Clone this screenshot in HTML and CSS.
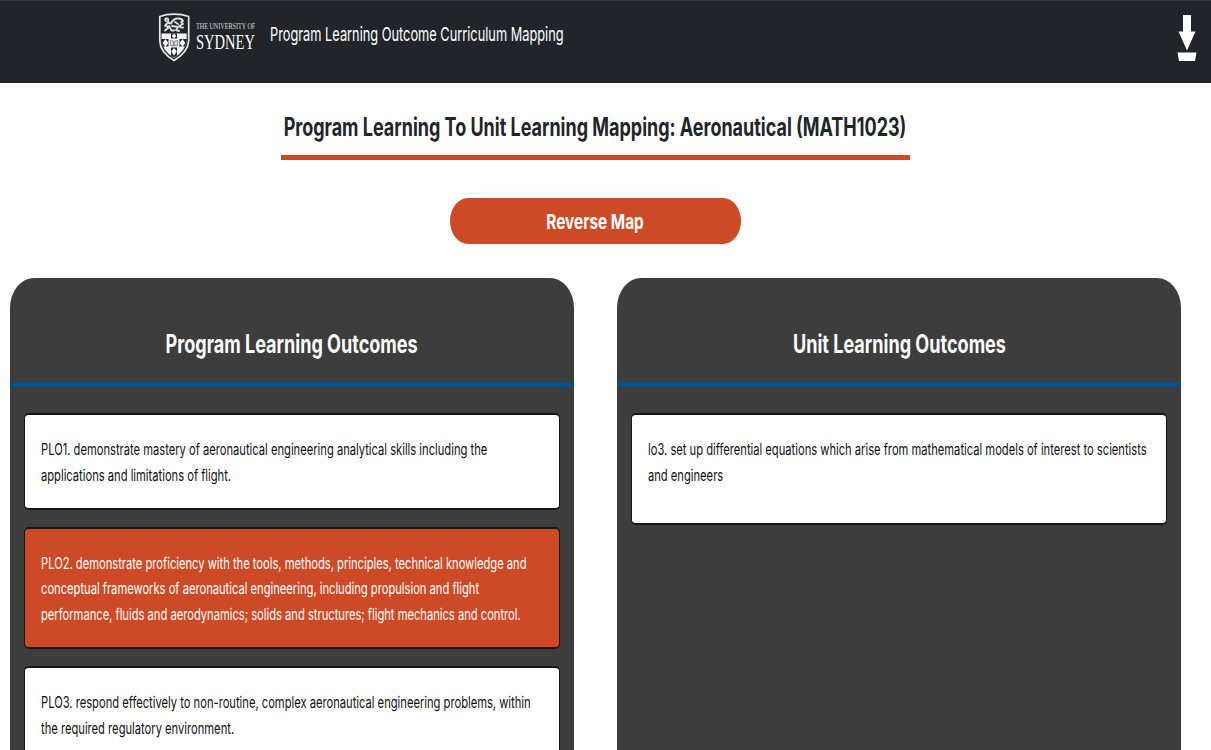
FILE: index.html
```
<!DOCTYPE html>
<html lang="en">
<head>
<meta charset="utf-8">
<title>Program Learning Outcome Curriculum Mapping</title>
<link rel="stylesheet" href="styles.css">
</head>
<body>
<header class="navbar">
  <div class="brand">
    <svg class="crest" width="32" height="50" viewBox="0 0 32 50">
      <path d="M1.8 3.500Q8 1.200 16 1.200Q24 1.200 30.700 3.500V28Q30 39 16 47.500Q2 39 1.800 28Z" fill="#212529" stroke="#e8e8e8" stroke-width="1.700"/>
      <path d="M3.500 20.500H28.700V28Q28 37 16 45Q4 37 3.500 28Z" fill="#f4f4f4"/>
      <path d="M3.300 26H10.500V33.500H4.800Q3.400 31 3.300 26ZM21.500 26H28.900Q28.600 31 27.200 33.500H21.500ZM13 20.500H19V25.500H13ZM13 34.500H19V42.500L16 44.500L13 42.500Z" fill="#212529"/>
      <path d="M7.500 26L10.300 30L7.500 34L4.700 30ZM24.500 26L27.300 30L24.500 34L21.700 30ZM16 20.500L18.200 23L16 25.500L13.800 23ZM16 35L18.800 38.500L16 42.500L13.200 38.500Z" fill="#fff"/>
      <path d="M12.300 27.500L15.700 28.300V33L12.300 32.300ZM19.700 27.500L16.300 28.300V33L19.700 32.300Z" fill="#ddd" stroke="#666" stroke-width=".7"/>
      <path d="M8 8Q6 6 8.500 5.500T10 9L12 10M7 13Q9 9 13 10.500Q15 6 19 5.500Q24 5 25 8L23 9L25 11L21 13Q23 15 25 14.500M8 12L10 15L7 17.500M11 13L13.500 17.500H16M14 13L20 14L18 17L21 18M17 9L20 11" fill="none" stroke="#ddd" stroke-width="1.900" stroke-linecap="round" stroke-linejoin="round"/>
    </svg>
    <div class="wordmark">
      <span class="wordmark-small">THE UNIVERSITY OF</span>
      <span class="wordmark-large">SYDNEY</span>
    </div>
    <span class="app-name">Program Learning Outcome Curriculum Mapping</span>
  </div>
  <svg class="download" width="20" height="48" viewBox="0 0 20 48">
    <path d="M6 1H14V17.500H18.500L10 36.500L1.500 17.500H6ZM0.500 38.500H19.500L18 47H2Z" fill="#fff"/>
  </svg>
</header>
<main>
  <h1 class="title"><span>Program Learning To Unit Learning Mapping: Aeronautical (MATH1023)</span></h1>
  <button class="reverse"><span>Reverse Map</span></button>
  <div class="columns">
    <section class="panel">
      <h2><span>Program Learning Outcomes</span></h2>
      <div class="cards">
        <article class="card"><p>PLO1. demonstrate mastery of aeronautical engineering analytical skills including the<br>applications and limitations of flight.</p></article>
        <article class="card selected"><p>PLO2. demonstrate proficiency with the tools, methods, principles, technical knowledge and<br>conceptual frameworks of aeronautical engineering, including propulsion and flight<br>performance, fluids and aerodynamics; solids and structures; flight mechanics and control.</p></article>
        <article class="card"><p>PLO3. respond effectively to non-routine, complex aeronautical engineering problems, within<br>the required regulatory environment.</p></article>
      </div>
    </section>
    <section class="panel">
      <h2><span>Unit Learning Outcomes</span></h2>
      <div class="cards">
        <article class="card tall"><p>lo3. set up differential equations which arise from mathematical models of interest to scientists<br>and engineers</p></article>
      </div>
    </section>
  </div>
</main>
</body>
</html>
```
FILE: styles.css
```
* { box-sizing: border-box; }
body {
  margin: 0;
  height: 750px;
  overflow: hidden;
  background: #fff;
  color: #212529;
  font-family: Inter, "Liberation Sans", sans-serif;
}
.navbar {
  display: flex;
  justify-content: space-between;
  height: 83px;
  padding: 11px 14.5px 0 158px;
  background: #212529;
  border-top: 1px solid #34383c;
  color: #fff;
}
.brand { display: flex; }
.crest { flex: none; margin-top: .5px; }
.wordmark {
  width: 59px;
  margin-left: 5.5px;
  padding-top: 11px;
  font-family: "Liberation Serif", serif;
  white-space: nowrap;
}
.wordmark span { display: block; transform-origin: left; }
.wordmark-small { font-size: 8px; line-height: 7px; transform: scaleX(.765); color: #ddd; }
.wordmark-large { margin-top: 3px; font-size: 22px; line-height: 18px; transform: scaleX(.66); }
.app-name {
  width: 294px;
  margin-left: 15px;
  padding-top: 11px;
  font-size: 19px;
  line-height: 24px;
  white-space: nowrap;
  transform: scaleX(.673);
  transform-origin: left;
}
.download { margin-top: 2px; }
main {
  display: flex;
  flex-direction: column;
  align-items: center;
  padding: 28px 30px 0 10px;
}
.title {
  display: flex;
  justify-content: center;
  width: 629px;
  height: 49px;
  margin: 0;
  border-bottom: 5px solid #ce4a27;
  font-size: 25px;
  font-weight: 650;
  line-height: 32px;
  white-space: nowrap;
}
.title span { transform: scaleX(.719); }
.reverse {
  display: flex;
  justify-content: center;
  width: 291px;
  height: 46px;
  margin: 38px 0 34px;
  padding: 0;
  border: 0;
  border-radius: 18px / 23px;
  background: #ce4a27;
  color: #fff;
  font: 650 20.5px/48px Inter, "Liberation Sans", sans-serif;
}
.reverse span { transform: scaleX(.75); }
.columns {
  display: grid;
  grid-template-columns: 563.7px 563.7px;
  gap: 43.8px;
  width: 1171px;
}
.panel {
  height: 500px;
  border-radius: 24px 24px 0 0 / 30px 30px 0 0;
  background: #3d3d3d;
}
.panel h2 {
  display: flex;
  justify-content: center;
  height: 109px;
  margin: 0;
  padding-top: 50px;
  border-bottom: 5px solid #01508f;
  color: #fff;
  font-size: 25px;
  font-weight: 650;
  line-height: 33px;
  white-space: nowrap;
}
.panel h2 span { transform: scaleX(.722); }
.cards {
  display: flex;
  flex-direction: column;
  gap: 17px;
  padding: 26px 14px 0;
}
.card {
  height: 97px;
  padding: 22.2px 15.9px 0;
  border: solid #161616;
  border-width: 2px 1px;
  border-radius: 5px;
  background: #fff;
  color: #111;
}
.card.selected { height: 122px; padding-top: 21.8px; background: #ce4a27; color: #fff; }
.card.tall { height: 112px; }
.card p {
  margin: 0;
  font-size: 16px;
  line-height: 25.600px;
  white-space: nowrap;
  transform: scaleX(.698);
  transform-origin: left;
}
```
